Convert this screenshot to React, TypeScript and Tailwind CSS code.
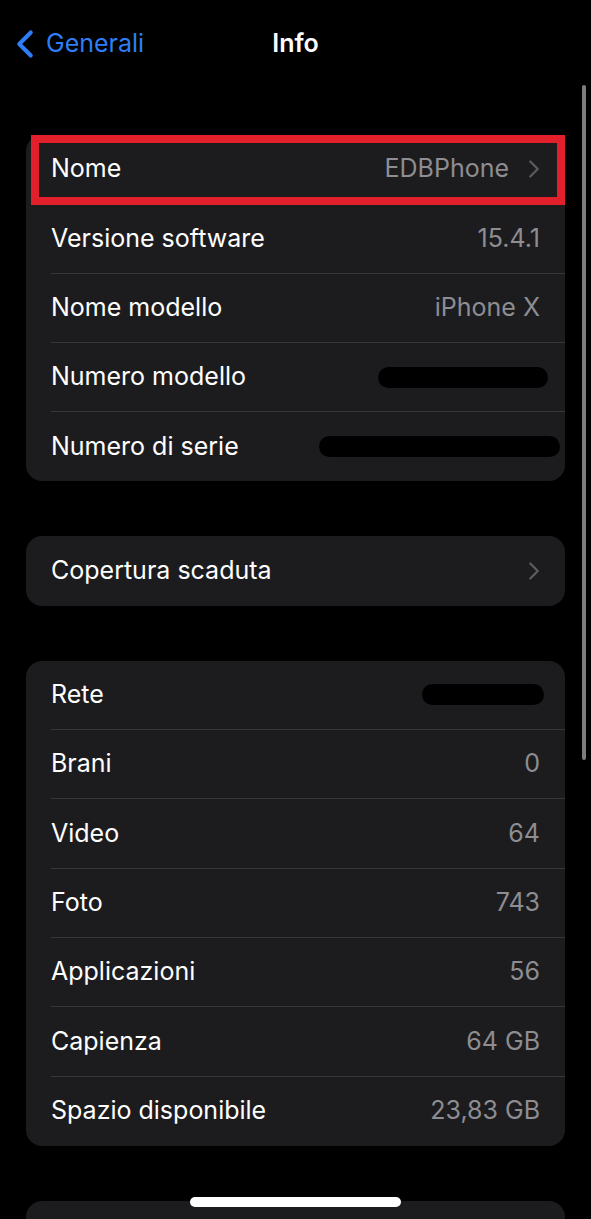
import { ChevronLeft, ChevronRight } from "lucide-react"

type Row = { label: string; value?: string; chevron?: boolean; redact?: string }

const device: Row[] = [
  { label: "Nome", value: "EDBPhone", chevron: true },
  { label: "Versione software", value: "15.4.1" },
  { label: "Nome modello", value: "iPhone X" },
  { label: "Numero modello", redact: "w-[170px] -mr-[8px]" },
  { label: "Numero di serie", redact: "w-[241px] -mr-[20px]" },
]

const media: Row[] = [
  { label: "Rete", redact: "w-[122px] -mr-[4px]" },
  { label: "Brani", value: "0" },
  { label: "Video", value: "64" },
  { label: "Foto", value: "743" },
  { label: "Applicazioni", value: "56" },
  { label: "Capienza", value: "64 GB" },
  { label: "Spazio disponibile", value: "23,83 GB" },
]

function SettingsRow({ row, last }: { row: Row; last: boolean }) {
  return (
    <div className="flex h-[69.3px] items-stretch pl-[25px]">
      <div
        className={
          "flex flex-1 items-center justify-between pr-[25px] " +
          (last ? "" : "border-b border-[#38383a]")
        }
      >
        <span className="text-[25px] text-white">{row.label}</span>
        <div className="flex items-center gap-[10px]">
          {row.value && <span className="text-[25px] text-[#8d8d92]">{row.value}</span>}
          {row.redact && <div className={"h-[21px] rounded-full bg-black " + row.redact} />}
          {row.chevron && <ChevronRight className="h-[30px] w-[30px] text-[#5c5c60] -mr-[9px]" strokeWidth={1.8} />}
        </div>
      </div>
    </div>
  )
}

function Group({ rows, children }: { rows: Row[]; children?: React.ReactNode }) {
  return (
    <div className="relative rounded-[16px] bg-[#1c1c1e]">
      {rows.map((r, i) => (
        <SettingsRow key={r.label} row={r} last={i === rows.length - 1} />
      ))}
      {children}
    </div>
  )
}

export default function App() {
  return (
    <div
      className="relative h-[1219px] overflow-hidden bg-black"
      style={{ fontFamily: "Inter, 'Noto Sans', sans-serif" }}
    >
      <div className="relative flex h-[88px] items-center justify-center">
        <div className="absolute left-[2px] top-[21px] flex items-center text-[#2f7ef6]">
          <ChevronLeft className="h-[46px] w-[46px]" strokeWidth={2.1} />
          <span className="-ml-[2px] text-[25px]">Generali</span>
        </div>
        <span className="text-[25px] font-semibold text-white">Info</span>
      </div>

      <div className="flex flex-col gap-[55px] px-[26px] pt-[47px]">
        <Group rows={device}>
          <div className="absolute left-[5px] right-0 top-0 h-[70px] border-[8px] border-[#e1202b]" />
        </Group>
        <Group rows={[{ label: "Copertura scaduta", chevron: true }]} />
        <Group rows={media} />
        <div className="h-[80px] rounded-[16px] bg-[#1c1c1e]" />
      </div>

      <div className="absolute right-[5px] top-[85px] h-[675px] w-[4px] rounded-full bg-[#7d7d80]" />
      <div className="absolute left-[190px] top-[1197px] h-[10px] w-[211px] rounded-full bg-white" />
    </div>
  )
}
